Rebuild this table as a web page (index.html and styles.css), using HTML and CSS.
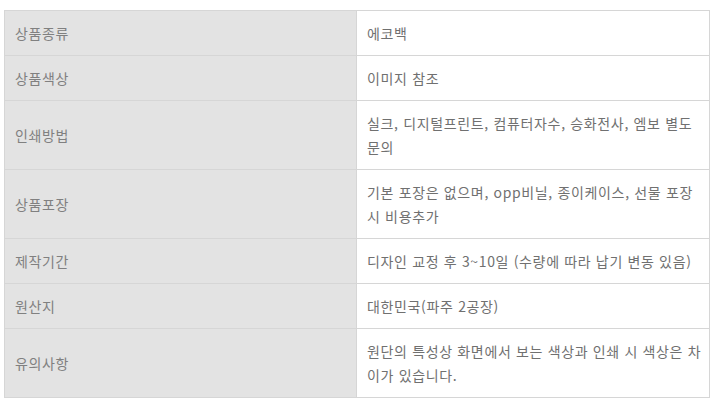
FILE: index.html
```html
<!DOCTYPE html>
<html lang="ko">
<head>
<meta charset="utf-8">
<link rel="stylesheet" href="styles.css">
</head>
<body>
<div class="spec">
  <div class="label">상품종류</div><div class="value">에코백</div>
  <div class="label">상품색상</div><div class="value">이미지 참조</div>
  <div class="label">인쇄방법</div><div class="value">실크, 디지털프린트, 컴퓨터자수, 승화전사, 엠보 별도 문의</div>
  <div class="label">상품포장</div><div class="value">기본 포장은 없으며, opp비닐, 종이케이스, 선물 포장 시 비용추가</div>
  <div class="label">제작기간</div><div class="value">디자인 교정 후 3~10일 (수량에 따라 납기 변동 있음)</div>
  <div class="label">원산지</div><div class="value">대한민국(파주 2공장)</div>
  <div class="label">유의사항</div><div class="value">원단의 특성상 화면에서 보는 색상과 인쇄 시 색상은 차이가 있습니다.</div>
</div>
</body>
</html>
```
FILE: styles.css
```css
html, body {
  margin: 0;
  background: #ffffff;
}
body {
  padding: 10px 0 0 4px;
  font-family: "Noto Sans CJK KR", "Noto Sans", sans-serif;
  font-size: 14px;
  line-height: 24px;
  letter-spacing: 0.65px;
  color: #707070;
}
.spec {
  width: 706px;
  box-sizing: border-box;
  display: grid;
  grid-template-columns: 352px 353px;
  border-top: 1px solid #d6d6d6;
  border-left: 1px solid #d6d6d6;
}
.label, .value {
  box-sizing: border-box;
  padding: 10px 4px 10px 10px;
  border-right: 1px solid #d6d6d6;
  border-bottom: 1px solid #d6d6d6;
  display: flex;
  align-items: center;
}
.label {
  background: #e3e3e3;
  color: #808080;
}
.value {
  background: #ffffff;
  word-break: break-all;
}
```
